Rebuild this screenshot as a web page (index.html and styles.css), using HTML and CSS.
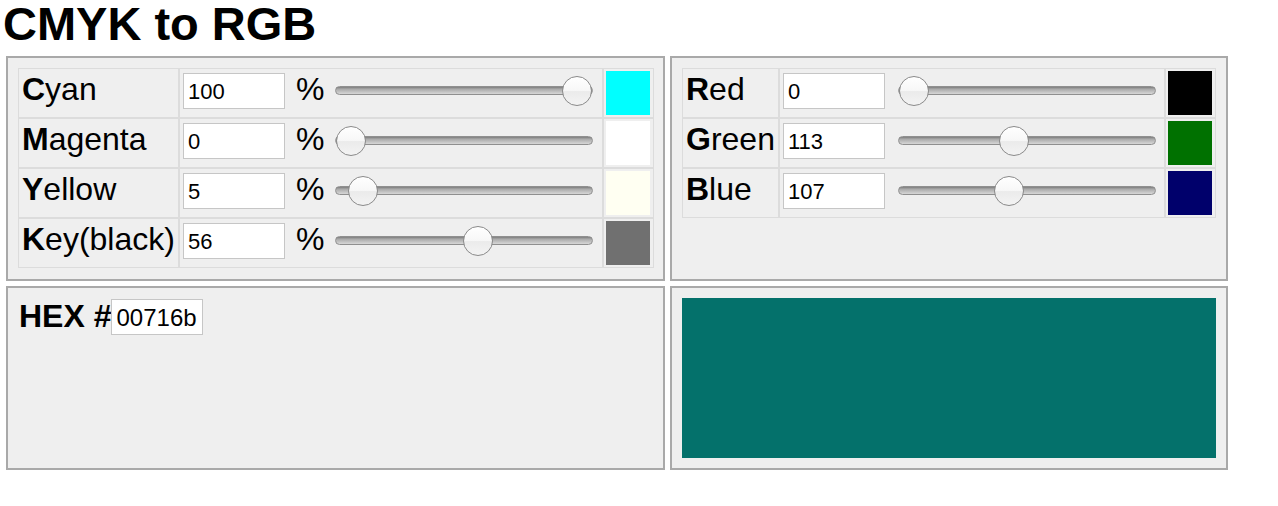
FILE: index.html
```html
<!DOCTYPE html>
<html lang="en">
<head>
<meta charset="utf-8">
<title>CMYK to RGB</title>
<link rel="stylesheet" href="styles.css">
</head>
<body>
<div class="page">
  <h1 class="title">CMYK to RGB</h1>
  <div class="board">
    <section class="panel">
      <div class="ctable cmyk">
        <div class="cell label"><b>C</b>yan</div>
        <div class="cell controls"><input class="num" type="text" value="100"><span class="pct">%</span><input class="range" type="range" min="0" max="100" value="100"></div>
        <div class="cell swatch-cell"><div class="swatch" style="background:#00ffff"></div></div>

        <div class="cell label"><b>M</b>agenta</div>
        <div class="cell controls"><input class="num" type="text" value="0"><span class="pct">%</span><input class="range" type="range" min="0" max="100" value="0"></div>
        <div class="cell swatch-cell"><div class="swatch" style="background:#ffffff"></div></div>

        <div class="cell label"><b>Y</b>ellow</div>
        <div class="cell controls"><input class="num" type="text" value="5"><span class="pct">%</span><input class="range" type="range" min="0" max="100" value="5"></div>
        <div class="cell swatch-cell"><div class="swatch" style="background:#fffff2"></div></div>

        <div class="cell label"><b>K</b>ey(black)</div>
        <div class="cell controls"><input class="num" type="text" value="56"><span class="pct">%</span><input class="range" type="range" min="0" max="100" value="56"></div>
        <div class="cell swatch-cell"><div class="swatch" style="background:#707070"></div></div>
      </div>
    </section>

    <section class="panel">
      <div class="ctable rgb">
        <div class="cell label"><b>R</b>ed</div>
        <div class="cell controls"><input class="num" type="text" value="0"><input class="range wide-gap" type="range" min="0" max="255" value="0"></div>
        <div class="cell swatch-cell"><div class="swatch" style="background:#000000"></div></div>

        <div class="cell label"><b>G</b>reen</div>
        <div class="cell controls"><input class="num" type="text" value="113"><input class="range wide-gap" type="range" min="0" max="255" value="113"></div>
        <div class="cell swatch-cell"><div class="swatch" style="background:#007100"></div></div>

        <div class="cell label"><b>B</b>lue</div>
        <div class="cell controls"><input class="num" type="text" value="107"><input class="range wide-gap" type="range" min="0" max="255" value="107"></div>
        <div class="cell swatch-cell"><div class="swatch" style="background:#00006b"></div></div>
      </div>
    </section>

    <section class="panel">
      <div class="hex-row"><span class="hex-label">HEX #</span><input class="hex" type="text" value="00716b"></div>
    </section>

    <section class="panel">
      <div class="preview"></div>
    </section>
  </div>
</div>
</body>
</html>
```

FILE: styles.css
```css
html, body {
  margin: 0;
  padding: 0;
  background: #ffffff;
}

body {
  font-family: "Liberation Sans", Arial, Helvetica, sans-serif;
  color: #000;
}

.page {
  padding-left: 6px;
  padding-top: 2px;
}

.title {
  margin: 0 0 11px -3px;
  font-size: 47px;
  line-height: 43px;
  font-weight: bold;
}

.board {
  display: grid;
  grid-template-columns: 659px 558px;
  grid-template-rows: 225px 184px;
  column-gap: 5px;
  row-gap: 5px;
}

.panel {
  box-sizing: border-box;
  border: 2px solid #a9a9a9;
  background: #efefef;
  padding: 10px;
}

.ctable {
  display: grid;
  grid-auto-rows: 50px;
}

.cmyk {
  grid-template-columns: 161px 424px 51px;
}

.rgb {
  grid-template-columns: 97px 386px 51px;
}

.cell {
  box-sizing: border-box;
  border: 1px solid #dcdcdc;
}

.label {
  font-size: 32px;
  line-height: 36px;
  padding: 2px 0 0 3px;
  white-space: nowrap;
}

.label b {
  font-weight: bold;
}

.controls {
  display: flex;
  align-items: flex-start;
  padding-left: 3px;
}

.num {
  box-sizing: border-box;
  width: 102px;
  height: 36px;
  margin: 4px 0 0 0;
  padding: 2px 4px 0;
  border: 1px solid #c6c6c6;
  background: #fff;
  font-family: "Liberation Sans", Arial, Helvetica, sans-serif;
  font-size: 22px;
  color: #000;
  outline: none;
}

.pct {
  font-size: 32px;
  line-height: 36px;
  margin: 2px 0 0 11px;
}

.range {
  -webkit-appearance: none;
  appearance: none;
  width: 258px;
  height: 30px;
  margin: 6px 0 0 11px;
  padding: 0;
  background: transparent;
}

.range.wide-gap {
  margin-left: 13px;
}

.range::-webkit-slider-runnable-track {
  box-sizing: border-box;
  height: 9px;
  border-radius: 5px;
  border: 1px solid #8f8f8f;
  background: linear-gradient(#7d7d7d 0%, #a9a9a9 30%, #c4c4c4 70%, #d6d6d6 100%);
}

.range::-webkit-slider-thumb {
  -webkit-appearance: none;
  appearance: none;
  box-sizing: border-box;
  width: 30px;
  height: 30px;
  margin-top: -11px;
  border-radius: 50%;
  border: 1.5px solid #8a8a8a;
  background: linear-gradient(#ffffff 0%, #f7f7f7 48%, #ebebeb 52%, #f3f3f3 100%);
}

.swatch-cell {
  padding: 2px 0 0 2px;
}

.swatch {
  width: 44px;
  height: 44px;
}

.hex-row {
  display: flex;
  align-items: flex-start;
}

.hex-label {
  font-size: 32px;
  line-height: 36px;
  font-weight: bold;
  padding-left: 1px;
  white-space: pre;
}

.hex {
  box-sizing: border-box;
  width: 92px;
  height: 36px;
  margin: 1px 0 0 0;
  padding: 2px 4px 0;
  border: 1px solid #c6c6c6;
  background: #fff;
  font-family: "Liberation Sans", Arial, Helvetica, sans-serif;
  font-size: 24px;
  color: #000;
  outline: none;
}

.preview {
  width: 534px;
  height: 160px;
  background: #04716b;
}
```
